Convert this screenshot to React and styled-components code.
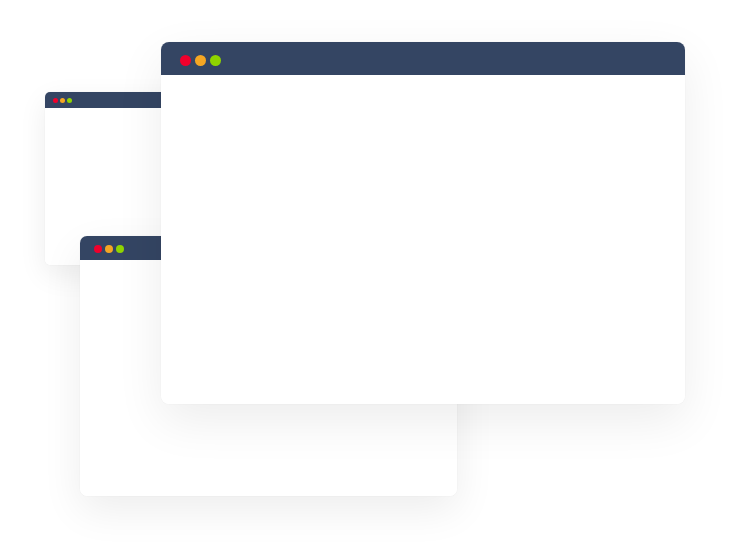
import React from 'react';
import styled, { createGlobalStyle } from 'styled-components';

const GlobalStyle = createGlobalStyle`
  html, body {
    margin: 0;
    padding: 0;
    background: #ffffff;
    font-family: "Liberation Sans", Arial, sans-serif;
  }
`;

const Canvas = styled.div`
  position: relative;
  width: 729px;
  height: 543px;
  overflow: hidden;
  background: #ffffff;
`;

// windows lie on a free canvas, so each is placed by its own offsets
const Window = styled.div`
  position: absolute;
  left: ${(p) => p.$left}px;
  top: ${(p) => p.$top}px;
  width: ${(p) => p.$width}px;
  height: ${(p) => p.$height}px;
  display: flex;
  flex-direction: column;
  background: #ffffff;
  border-radius: ${(p) => p.$radius}px;
  box-shadow:
    0 0 1px rgba(0, 0, 0, 0.12),
    0 ${(p) => p.$shadow * 0.35}px ${(p) => p.$shadow}px rgba(0, 0, 0, 0.075);
  overflow: hidden;
`;

const TitleBar = styled.div`
  flex: 0 0 ${(p) => p.$height}px;
  box-sizing: border-box;
  display: flex;
  align-items: center;
  gap: ${(p) => p.$gap}px;
  padding-left: ${(p) => p.$pad}px;
  padding-top: ${(p) => p.$drop}px;
  background: #344563;
`;

const Dot = styled.span`
  flex: 0 0 auto;
  width: ${(p) => p.$size}px;
  height: ${(p) => p.$size}px;
  border-radius: 50%;
  background: ${(p) => p.$color};
`;

const Body = styled.div`
  flex: 1;
  background: #ffffff;
`;

const windows = [
  { id: 'back', left: 45, top: 92, width: 254, height: 173, radius: 5, bar: 16, dot: 5, gap: 2, pad: 8, drop: 0, shadow: 28 },
  { id: 'middle', left: 80, top: 236, width: 377, height: 260, radius: 7, bar: 24, dot: 8, gap: 3, pad: 14, drop: 1, shadow: 40 },
  { id: 'front', left: 161, top: 42, width: 524, height: 362, radius: 8, bar: 33, dot: 11, gap: 4, pad: 19, drop: 3, shadow: 48 },
];

const dotColors = ['#f0002c', '#f5a623', '#8fd400'];

const App = () => (
  <>
    <GlobalStyle />
    <Canvas>
      {windows.map((w) => (
        <Window
          key={w.id}
          $left={w.left}
          $top={w.top}
          $width={w.width}
          $height={w.height}
          $radius={w.radius}
          $shadow={w.shadow}
        >
          <TitleBar $height={w.bar} $gap={w.gap} $pad={w.pad} $drop={w.drop}>
            {dotColors.map((c) => (
              <Dot key={c} $size={w.dot} $color={c} />
            ))}
          </TitleBar>
          <Body />
        </Window>
      ))}
    </Canvas>
  </>
);

export default App;
